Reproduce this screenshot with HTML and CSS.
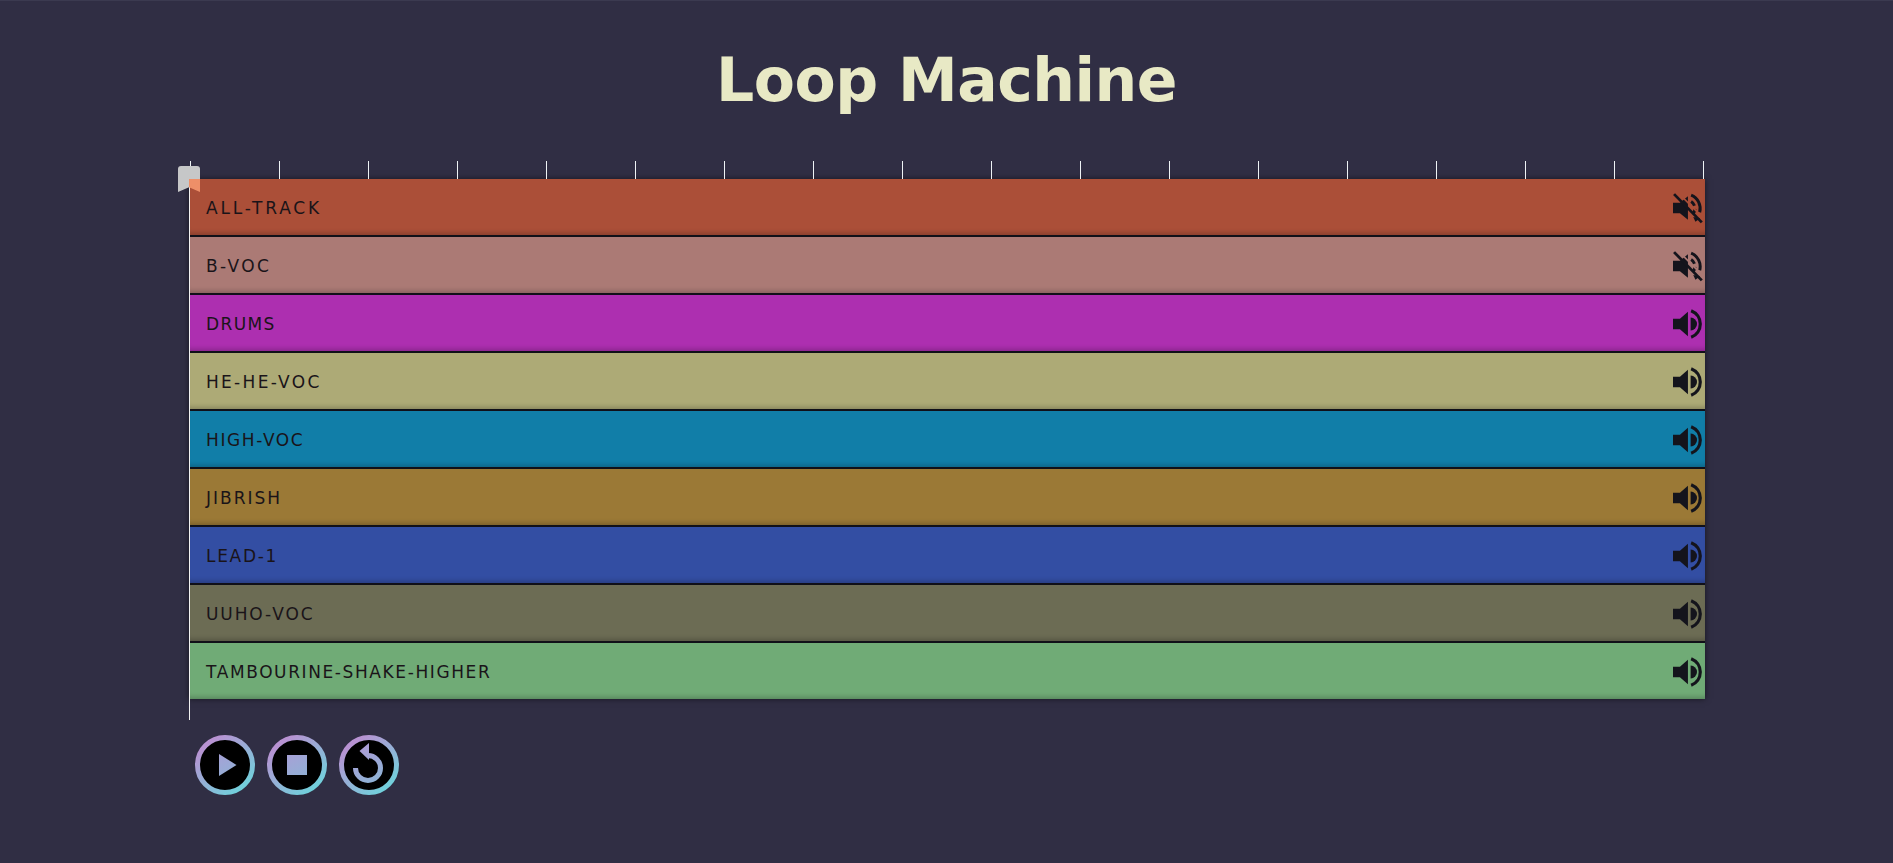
FILE: index.html
```html
<!DOCTYPE html>
<html lang="en">
<head>
<meta charset="utf-8">
<title>Loop Machine</title>
<link rel="stylesheet" href="styles.css">
</head>
<body>
<svg class="defs" width="0" height="0" aria-hidden="true">
  <defs>
    <linearGradient id="grad" gradientUnits="userSpaceOnUse" x1="8" y1="4" x2="50" y2="58">
      <stop offset="0.1" stop-color="#b892d2"/>
      <stop offset="0.95" stop-color="#6fd2dc"/>
    </linearGradient>
    <linearGradient id="grad2" gradientUnits="userSpaceOnUse" x1="18" y1="8" x2="42" y2="50">
      <stop offset="0" stop-color="#b09ad6"/>
      <stop offset="1" stop-color="#8ab6d6"/>
    </linearGradient>
    <mask id="cut" maskUnits="userSpaceOnUse" x="0" y="0" width="30" height="30">
      <rect width="30" height="30" fill="#fff"/>
      <path d="M4 0l27 27" stroke="#000" stroke-width="1.600" fill="none"/>
    </mask>
    <symbol id="vol" viewBox="0 0 30 30">
      <path fill="currentColor" d="M0 10h6.500L14 3.500v23L6.500 20H0z"/>
      <path fill="currentColor" d="M16.500 9a6 6 0 0 1 0 12z"/>
      <path fill="none" stroke="currentColor" stroke-width="3" d="M17 2.500a13.400 13.400 0 0 1 0 25"/>
    </symbol>
    <symbol id="mute" viewBox="0 0 30 30">
      <g mask="url(#cut)">
        <path fill="currentColor" d="M0 10h6.500L14 4v22l-7.500-6H0z"/>
        <path fill="none" stroke="currentColor" stroke-width="2.800" stroke-dasharray="5 3" d="M17 9a7.500 7.500 0 0 1 2 11"/>
        <path fill="none" stroke="currentColor" stroke-width="2.800" d="M17 3a13.400 13.400 0 0 1 8 16"/>
        <path fill="currentColor" d="M19 23.500l6.500 1-4.500 3.500z"/>
      </g>
      <path fill="none" stroke="currentColor" stroke-width="2.600" d="M1 2l26 26.500"/>
    </symbol>
  </defs>
</svg>
<main class="app">
  <h1 class="title">Loop Machine</h1>
  <div class="board">
    <div class="ruler">
      <i class="tick"></i><i class="tick"></i><i class="tick"></i><i class="tick"></i><i class="tick"></i><i class="tick"></i>
      <i class="tick"></i><i class="tick"></i><i class="tick"></i><i class="tick"></i><i class="tick"></i><i class="tick"></i>
      <i class="tick"></i><i class="tick"></i><i class="tick"></i><i class="tick"></i><i class="tick"></i><i class="tick"></i>
    </div>
    <div class="flag"></div>
    <div class="cursor"></div>
    <div class="tracks">
      <div class="track t1"><span>ALL-TRACK</span><svg class="icon"><use href="#mute"/></svg></div>
      <div class="track t2"><span>B-VOC</span><svg class="icon"><use href="#mute"/></svg></div>
      <div class="track t3"><span>DRUMS</span><svg class="icon"><use href="#vol"/></svg></div>
      <div class="track t4"><span>HE-HE-VOC</span><svg class="icon"><use href="#vol"/></svg></div>
      <div class="track t5"><span>HIGH-VOC</span><svg class="icon"><use href="#vol"/></svg></div>
      <div class="track t6"><span>JIBRISH</span><svg class="icon"><use href="#vol"/></svg></div>
      <div class="track t7"><span>LEAD-1</span><svg class="icon"><use href="#vol"/></svg></div>
      <div class="track t8"><span>UUHO-VOC</span><svg class="icon"><use href="#vol"/></svg></div>
      <div class="track t9"><span>TAMBOURINE-SHAKE-HIGHER</span><svg class="icon"><use href="#vol"/></svg></div>
    </div>
    <div class="controls">
      <button class="ctrl" type="button" aria-label="Play">
        <svg viewBox="0 0 60 60"><circle cx="30" cy="30" r="27.500" class="ring"/><path class="glyph" d="M24 19L41.500 30 24 41z"/></svg>
      </button>
      <button class="ctrl" type="button" aria-label="Stop">
        <svg viewBox="0 0 60 60"><circle cx="30" cy="30" r="27.500" class="ring"/><rect class="glyph" x="20" y="20" width="20" height="20"/></svg>
      </button>
      <button class="ctrl" type="button" aria-label="Restart">
        <svg viewBox="0 0 60 60"><circle cx="30" cy="30" r="27.500" class="ring"/><path class="arc" d="M29 20.500a12.500 12.500 0 1 1-12.500 12.500"/><path class="glyph" d="M30 8v17L20.500 16z"/></svg>
      </button>
    </div>
  </div>
</main>
</body>
</html>
```

FILE: styles.css
```css
* { box-sizing: border-box; }
html, body { margin: 0; height: 100%; }
body {
  background: #302e44;
  font-family: "DejaVu Sans", "Liberation Sans", sans-serif;
  overflow: hidden;
}
.defs { position: absolute; }
.app { display: flex; flex-direction: column; align-items: center; padding-top: 1px; border-top: 1px solid #3b3a50; }
.title {
  margin: 44px 0 0;
  height: 115px;
  line-height: 68px;
  font-family: "DejaVu Sans", "Liberation Sans", sans-serif;
  font-size: 60px;
  font-weight: 700;
  color: #e8e9c5;
  letter-spacing: -0.5px;
}
.board { position: relative; width: 1516px; margin-left: 1px; }
.ruler { display: flex; justify-content: space-between; height: 18px; width: 1514px; margin-left: 1px; }
.tick { display: block; width: 1px; height: 18px; background: #eef3f5; }
.flag {
  position: absolute; left: -11px; top: 5px;
  width: 22px; height: 26px;
  background: linear-gradient(#ee8f68, #ee8f68) right bottom / 11px 13px no-repeat, #c6c7c8;
  border-radius: 3px 3px 0 0;
  clip-path: polygon(0 0, 100% 0, 100% 100%, 50% 82%, 0 100%);
  z-index: 2;
}
.cursor { position: absolute; left: 0; top: 18px; width: 1px; height: 541px; background: #f2f2f2; z-index: 1; }
.tracks { display: flex; flex-direction: column; box-shadow: 0 0 6px rgba(0, 0, 0, .55); }
.track {
  display: flex; align-items: center; justify-content: space-between;
  height: 58px;
  padding: 1px 0 0 17px;
  border-bottom: 2px solid #101018;
  box-shadow: inset 0 -5px 5px -3px rgba(0, 0, 0, .22);
  font-size: 17px;
  color: #1a1419;
}
.track:last-child { border-bottom: 0; height: 56px; }
.icon { width: 32px; height: 32px; color: #14141c; }
.t1 { background: #ab4f38; letter-spacing: 2.8px; }
.t2 { background: #ab7a75; letter-spacing: 2.4px; }
.t3 { background: #ad2fb0; letter-spacing: 1.4px; }
.t4 { background: #adaa76; letter-spacing: 2.3px; }
.t5 { background: #117ea8; letter-spacing: 1.6px; }
.t6 { background: #9b7936; letter-spacing: 2px; }
.t7 { background: #334ea3; letter-spacing: 1.7px; }
.t8 { background: #6c6c54; letter-spacing: 1.9px; }
.t9 { background: #70ab76; letter-spacing: 1.6px; }
.controls { display: flex; gap: 12px; padding: 36px 0 0 6px; }
.ctrl { width: 60px; height: 60px; padding: 0; border: 0; background: none; display: block; }
.ctrl svg { display: block; width: 60px; height: 60px; }
.ring { fill: #000; stroke: url(#grad); stroke-width: 5; }
.glyph { fill: url(#grad2); }
.arc { fill: none; stroke: url(#grad2); stroke-width: 5; }
```
